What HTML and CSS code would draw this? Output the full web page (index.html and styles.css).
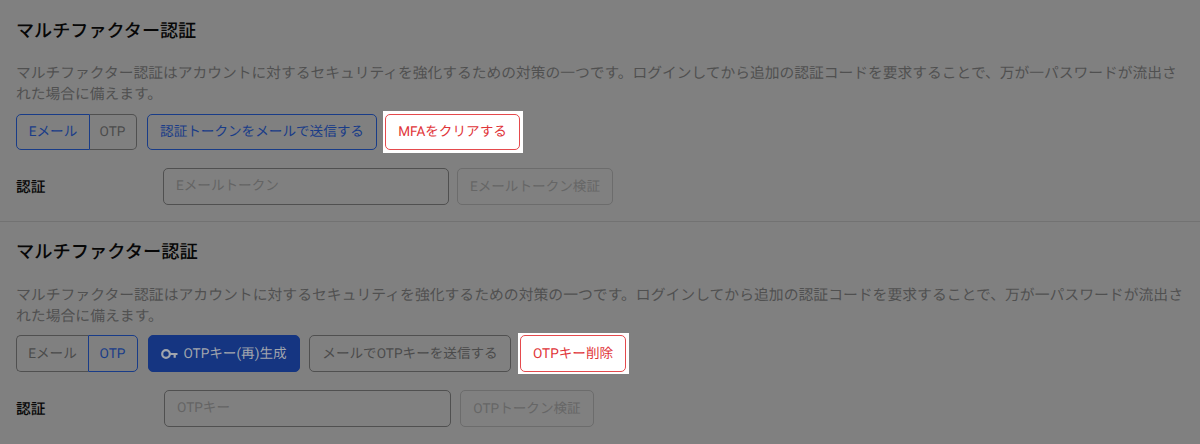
FILE: index.html
```html
<!DOCTYPE html>
<html lang="ja">
<head>
<meta charset="utf-8">
<title>マルチファクター認証</title>
<link rel="stylesheet" href="styles.css">
</head>
<body>
<section class="mfa mfa-email">
  <h2>マルチファクター認証</h2>
  <p>マルチファクター認証はアカウントに対するセキュリティを強化するための対策の一つです。ログインしてから追加の認証コードを要求することで、万が一パスワードが流出さ<br>れた場合に備えます。</p>
  <div class="actions">
    <div class="segments"><button class="seg active first">Eメール</button><button class="seg last">OTP</button></div>
    <button class="btn outline send">認証トークンをメールで送信する</button>
    <div class="highlight"><button class="btn danger">MFAをクリアする</button></div>
  </div>
  <div class="verify">
    <label for="email-token">認証</label>
    <input id="email-token" placeholder="Eメールトークン">
    <button class="btn disabled" disabled>Eメールトークン検証</button>
  </div>
</section>
<section class="mfa mfa-otp">
  <h2>マルチファクター認証</h2>
  <p>マルチファクター認証はアカウントに対するセキュリティを強化するための対策の一つです。ログインしてから追加の認証コードを要求することで、万が一パスワードが流出さ<br>れた場合に備えます。</p>
  <div class="actions">
    <div class="segments"><button class="seg first">Eメール</button><button class="seg active last">OTP</button></div>
    <button class="btn primary"><svg class="key" viewBox="0 0 17 12" aria-hidden="true"><circle cx="5" cy="6" r="3.8"/><path d="M9 6h7.5M13.7 6v3.8"/></svg><span>OTPキー(再)生成</span></button>
    <button class="btn send">メールでOTPキーを送信する</button>
    <div class="highlight"><button class="btn danger">OTPキー削除</button></div>
  </div>
  <div class="verify">
    <label for="otp-key">認証</label>
    <input id="otp-key" placeholder="OTPキー">
    <button class="btn disabled" disabled>OTPトークン検証</button>
  </div>
</section>
</body>
</html>
```
FILE: styles.css
```css
* { box-sizing: border-box; }
body {
  margin: 0;
  height: 444px;
  overflow: hidden;
  background: #808080;
  color: #070707;
  font-family: Roboto, "Noto Sans CJK JP", sans-serif;
  text-rendering: geometricPrecision;
}
.mfa { padding: 18px 16px 0; }
.mfa-email { height: 222px; border-bottom: 1px solid #727272; }
.mfa-otp { padding-top: 17px; }
h2 { margin: 0; height: 28px; font-size: 18.1px; line-height: 28px; font-weight: 500; }
p { margin: 17px 0 0; height: 42px; font-size: 14.76px; line-height: 21px; color: #505050; white-space: nowrap; }
.mfa-otp h2 { font-size: 18.25px; }
.mfa-otp p { margin-top: 18px; font-size: 14.84px; }
.actions { display: flex; align-items: center; height: 42px; margin-top: 6px; }
.mfa-otp .actions { height: 41px; margin-top: 6px; }
button, input { font: 400 13.6px/20px Roboto, "Noto Sans CJK JP", sans-serif; text-rendering: geometricPrecision; }
.btn, .seg {
  display: flex;
  align-items: center;
  justify-content: center;
  height: 36px;
  padding: 0;
  border: 1px solid #505050;
  border-radius: 5px;
  background: transparent;
  color: #4b4b4b;
  white-space: nowrap;
}
.segments { display: flex; margin-right: 10px; }
.seg.first { width: 73px; border-radius: 5px 0 0 5px; border-right: 0; }
.seg.last { width: 48px; padding-right: 1px; border-radius: 0 5px 5px 0; }
.seg.active { border: 1px solid #193c88; color: #193c88; }
.seg.active.first { width: 74px; }
.seg.active.first + .seg { width: 47px; border-left: 0; }
.mfa-otp .seg.first { width: 72px; }
.mfa-otp .seg.last { width: 50px; }
.outline { border-color: #193c88; color: #193c88; }
.mfa-email .send { width: 230px; }
.primary { width: 152px; gap: 5px; border-color: #153581; background: #153581; color: #a1a5ad; }
.key { width: 17px; height: 12px; fill: none; stroke: currentColor; stroke-width: 2.2; }
.mfa-otp .send { width: 202px; margin-left: 9px; }
.highlight { margin-left: 6px; padding: 3px 3px 3px 2px; background: #fff; }
.mfa-otp .highlight { margin-left: 7px; padding: 2px 3px 2px 2px; }
.highlight .btn { width: 135px; border-color: #e54a4d; color: #df3539; }
.mfa-otp .highlight .btn { width: 106px; height: 37px; }
.verify { display: flex; align-items: center; height: 37px; margin-top: 15px; }
.mfa-otp .verify { margin-top: 16px; }
label { width: 147px; font-size: 14.7px; font-weight: 500; line-height: 22px; }
input { width: 286px; height: 37px; padding: 0 12px 1px; border: 1px solid #505050; border-radius: 5px; background: transparent; outline: 0; }
input::placeholder { color: #646464; opacity: 1; }
.disabled { width: 156px; height: 37px; margin-left: 8px; border-color: #6c6c6c; color: #666; }
.mfa-otp label { width: 148px; }
.mfa-otp input { width: 287px; }
.mfa-otp .disabled { width: 134px; margin-left: 9px; }
.mfa-otp .btn, .mfa-otp .seg { height: 37px; }
```
